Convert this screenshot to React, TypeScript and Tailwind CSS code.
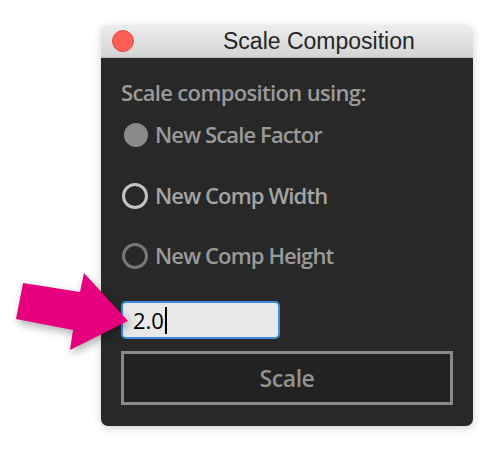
export default function App() {
  const font = { fontFamily: '"Open Sans", "Noto Sans", sans-serif' };
  return (
    <div className="relative w-[500px] h-[468px] bg-white overflow-hidden">
      <div className="pt-[25px] pl-[101px]">
        <div className="w-[372px] h-[401px] rounded-[7px] overflow-hidden shadow-[0_2px_8px_rgba(0,0,0,0.18)] flex flex-col">
          {/* title bar */}
          <div className="h-[33px] shrink-0 flex items-center bg-gradient-to-b from-[#ededed] to-[#d4d4d4] border-b border-[#b8b8b8]">
            <div className="ml-[11px] w-[22px] h-[22px] rounded-full bg-[#fc5f57] border border-[#df4a43]" />
            <div
              className="ml-[89px] text-[23px] leading-none text-[#262626]"
              style={{ fontFamily: '"Liberation Sans", Arial, sans-serif' }}
            >
              Scale Composition
            </div>
          </div>

          {/* body */}
          <div className="flex-1 bg-[#282828] px-[20px] pt-[20px] font-semibold" style={font}>
            <div className="h-[28px] flex items-center text-[22px] text-[#9a9a9a] tracking-[-0.03em]">
              Scale composition using:
            </div>

            <div className="mt-[8px] h-[40px] flex items-center gap-[7px] text-[22px] text-[#9a9a9a] tracking-[-0.04em]">
              <span className="ml-[3px] mt-[1px] w-[24px] h-[24px] rounded-full bg-[#8a8a8a]" />
              <span>New Scale Factor</span>
            </div>
            <div className="mt-[21px] h-[40px] flex items-center gap-[7px] text-[22px] text-[#a4a4a4] tracking-[-0.04em]">
              <span className="ml-[1px] mt-[1px] w-[26px] h-[26px] rounded-full border-[3px] border-[#c4c4c4]" />
              <span>New Comp Width</span>
            </div>
            <div className="mt-[20px] h-[40px] flex items-center gap-[7px] text-[22px] text-[#9a9a9a] tracking-[-0.04em]">
              <span className="ml-[1px] mt-[1px] w-[26px] h-[26px] rounded-full border-[3px] border-[#767676]" />
              <span>New Comp Height</span>
            </div>

            <div className="mt-[26px] w-[159px] h-[38px] rounded-[5px] border-2 border-[#3d8de0] bg-[#e9e9e9] flex items-center pl-[10px] text-[22px] font-normal text-black">
              <span>2.0</span>
              <span className="ml-[1px] w-[2px] h-[27px] bg-black" />
            </div>

            <div className="mt-[12px] h-[54px] border-[3px] border-[#8a8a8a] bg-[#222222] flex items-center justify-center text-[23px] text-[#929292] tracking-[-0.02em]">
              Scale
            </div>
          </div>
        </div>
      </div>

      {/* pointer arrow */}
      <svg
        className="absolute left-0 top-0 pointer-events-none"
        width="500"
        height="468"
        viewBox="0 0 500 468"
        style={{ filter: "drop-shadow(2px 4px 4px rgba(0,0,0,0.3))" }}
      >
        <polygon points="23,283 80,292 84,273 128,321 70,350 73,330 16,319" fill="#e6007e" />
      </svg>
    </div>
  );
}
